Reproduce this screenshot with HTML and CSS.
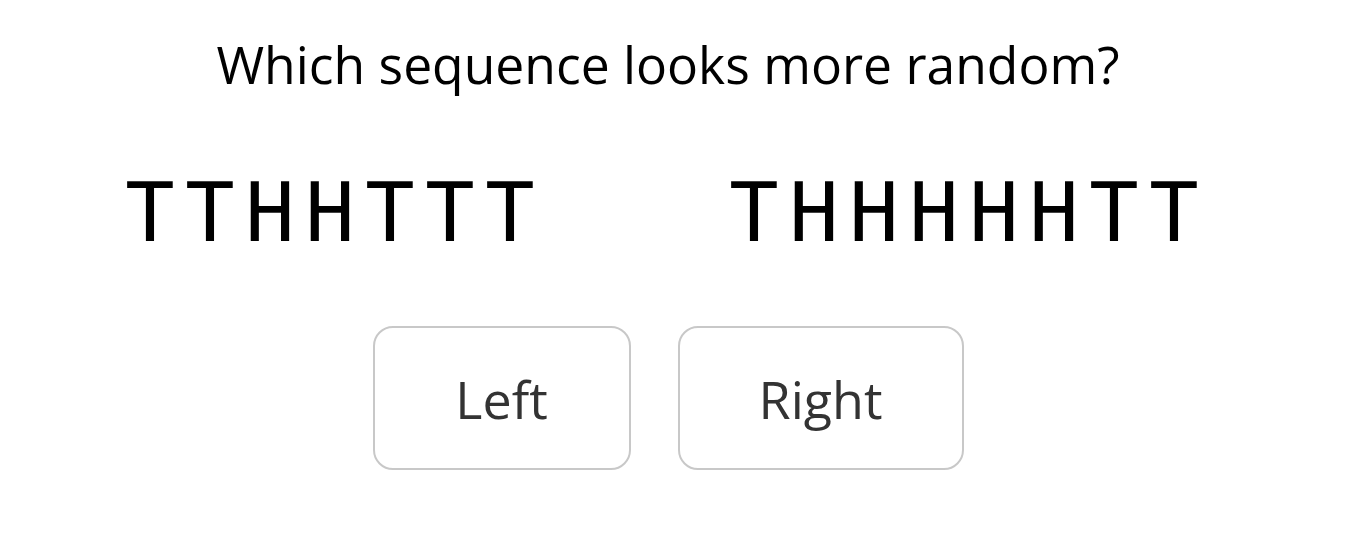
FILE: index.html
```html
<!DOCTYPE html>
<html lang="en">
<head>
    <meta charset="UTF-8">
    <title>Which sequence looks more random?</title>
    <link rel="stylesheet" href="styles.css">
</head>
<body>

<div class="quiz">
    <h1 class="question">Which sequence looks more random?</h1>

    <div class="sequences">
        <div class="sequence">
            <span>T</span><span>T</span><span>H</span><span>H</span><span>T</span><span>T</span><span>T</span>
        </div>
        <div class="sequence">
            <span>T</span><span>H</span><span>H</span><span>H</span><span>H</span><span>H</span><span>T</span><span>T</span>
        </div>
    </div>

    <div class="choices">
        <button class="choice choice-left">Left</button>
        <button class="choice choice-right">Right</button>
    </div>
</div>

</body>
</html>
```

FILE: styles.css
```css
body {
    margin: 0;
    font-family: 'Open Sans', 'Noto Sans', Arial, sans-serif;
    background-color: #fff;
    color: #000;
}
.quiz {
    width: 1336px;
    padding-top: 24px;
    text-align: center;
}
.question {
    margin: 0;
    font-size: 51.6px;
    font-weight: 400;
    line-height: 80px;
}
.sequences {
    display: flex;
    justify-content: center;
    gap: 184px;
    margin-top: 59px;
    padding-right: 12px;
}
.sequence {
    display: flex;
}
.sequence span {
    width: 60px;
    font-family: 'DejaVu Sans Mono', monospace;
    font-size: 82px;
    line-height: 100px;
    text-align: center;
}
.choices {
    display: flex;
    justify-content: center;
    gap: 47px;
    margin-top: 63px;
}
.choice {
    height: 144px;
    border: 2px solid #c8c8c8;
    border-radius: 20px;
    background-color: #fff;
    color: #333;
    font-family: inherit;
    font-size: 52px;
}
.choice-left {
    width: 258px;
}
.choice-right {
    width: 286px;
}
```
